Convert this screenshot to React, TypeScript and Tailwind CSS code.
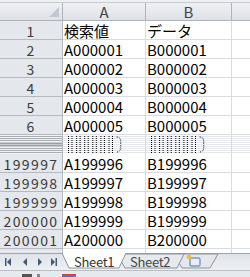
import React from "react";

const F = { fontFamily: '"Noto Sans CJK JP", "Noto Sans", sans-serif' };

const top = [
  ["1", "検索値", "データ"],
  ["2", "A000001", "B000001"],
  ["3", "A000002", "B000002"],
  ["4", "A000003", "B000003"],
  ["5", "A000004", "B000004"],
  ["6", "A000005", "B000005"],
];
const bottom = [
  ["199997", "A199996", "B199996"],
  ["199998", "A199997", "B199997"],
  ["199999", "A199998", "B199998"],
  ["200000", "A199999", "B199999"],
  ["200001", "A200000", "B200000"],
  ["200002", "", ""],
];

function Row({ r }: { r: string[] }) {
  return (
    <div className="flex h-[19px] shrink-0">
      <div className="w-[63px] shrink-0 bg-[#e4e7eb] border-r border-b border-[#b4b9c0] flex items-center justify-center text-[14px] text-[#3b3b3b] tracking-[1.4px] leading-none pt-[1px]">
        {r[0]}
      </div>
      <div className="w-[83px] shrink-0 border-r border-b border-[#d8dce2] flex items-center pl-[1px] text-[15px] text-black leading-none pt-[1px] whitespace-nowrap overflow-hidden">
        {r[1]}
      </div>
      <div className="w-[86px] shrink-0 border-r border-b border-[#d8dce2] flex items-center pl-[1px] text-[15px] text-black leading-none pt-[1px] whitespace-nowrap overflow-hidden">
        {r[2]}
      </div>
      <div className="flex-1 border-b border-[#d8dce2]" />
    </div>
  );
}

function Squish({ x0 }: { x0: number }) {
  const xs: number[] = [];
  const w = 8.1;
  for (let i = 0; i < 6; i++) {
    xs.push(x0 + i * w + 1.5, x0 + i * w + 5);
  }
  const e = x0 + 6 * w;
  return (
    <svg width="80" height="19" className="absolute left-0 top-0">
      {xs.map((x, i) => (
        <line key={i} x1={x} y1={1} x2={x} y2={18} stroke="#000" strokeWidth={1} strokeDasharray="1 1" />
      ))}
      <path d={`M${e + 1} 2 Q${e + 6} 2 ${e + 5} 9 Q${e + 6} 17 ${e + 1} 17`} stroke="#000" strokeWidth={1} strokeDasharray="1 1" fill="none" />
    </svg>
  );
}

function Split() {
  const cellBg = "bg-[repeating-linear-gradient(to_bottom,#ffffff_0px,#ffffff_1px,#e3e6eb_1px,#e3e6eb_2px)]";
  return (
    <div className="flex h-[19px] shrink-0">
      <div className="w-[63px] shrink-0 border-r border-[#b4b9c0] bg-[repeating-linear-gradient(to_bottom,#f2f3f5_0px,#f2f3f5_1px,#a9aeb5_1px,#a9aeb5_2px)] flex flex-col justify-center">
        <div className="h-[5px] bg-[repeating-linear-gradient(to_bottom,#c9cdd3_0px,#c9cdd3_1px,#9ca1a8_1px,#9ca1a8_2px)]" />
      </div>
      <div className={`w-[83px] shrink-0 border-r border-[#d8dce2] relative ${cellBg}`}>
        <Squish x0={4} />
      </div>
      <div className={`w-[86px] shrink-0 border-r border-[#d8dce2] relative ${cellBg}`}>
        <Squish x0={4} />
      </div>
      <div className={`flex-1 ${cellBg}`} />
    </div>
  );
}

function Tabs() {
  return (
    <div className="relative h-[17px] shrink-0 bg-[linear-gradient(to_bottom,#dfe3e8,#eef0f3)] border-t border-[#9ea4ab]">
      <svg width="250" height="17" className="absolute left-0 top-[-1px]">
        <g fill="#3f5a7a">
          <rect x="5" y="5" width="1.5" height="8" />
          <polygon points="7,9 11,5 11,13" />
          <polygon points="23,9 27,5 27,13" />
          <polygon points="38,5 42,9 38,13" />
          <polygon points="51,5 55,9 51,13" />
          <rect x="55.5" y="5" width="1.5" height="8" />
        </g>
        <polygon points="174,1 218,1 210,15 182,15" fill="#e4e7eb" stroke="#8e949b" />
        <polygon points="117,1 184,1 177,15 125,15" fill="#e6e9ed" stroke="#8e949b" />
        <polygon points="62,0 126,0 119,15 69,15" fill="#ffffff" stroke="#8e949b" />
        <line x1="63" y1="0.5" x2="125" y2="0.5" stroke="#ffffff" strokeWidth="1.5" />
        <rect x="190" y="5" width="10" height="8" fill="#e8eef7" stroke="#4a6fa5" strokeWidth="1" rx="1" />
        <circle cx="189" cy="4" r="2.3" fill="#f0c030" />
      </svg>
      <div className="absolute left-[74px] top-0 text-[13px] tracking-[-0.3px] leading-[16px] text-[#333] whitespace-nowrap" style={F}>Sheet1</div>
      <div className="absolute left-[130px] top-0 text-[13px] tracking-[-0.3px] leading-[16px] text-[#444] whitespace-nowrap" style={F}>Sheet2</div>
    </div>
  );
}

export default function App() {
  return (
    <div className="w-[250px] h-[277px] overflow-hidden bg-white flex flex-col" style={F}>
      <div className="h-[253px] overflow-hidden flex flex-col shrink-0">
        <div className="h-[3px] shrink-0 bg-[#eef0f2] border-b border-[#c6cbd1]" />
        <div className="flex h-[18px] shrink-0 bg-[linear-gradient(to_bottom,#eef0f3,#dde1e6)]">
          <div className="w-[63px] shrink-0 border-r border-b border-[#aeb4bb] relative">
            <svg width="10" height="10" className="absolute right-[3px] bottom-[3px]">
              <polygon points="10,0 10,10 0,10" fill="#c3c8ce" />
            </svg>
          </div>
          <div className="w-[83px] shrink-0 border-r border-b border-[#aeb4bb] flex items-center justify-center text-[15px] text-[#444] leading-none">A</div>
          <div className="w-[86px] shrink-0 border-r border-b border-[#aeb4bb] flex items-center justify-center text-[15px] text-[#444] leading-none">B</div>
          <div className="flex-1 border-b border-[#aeb4bb]" />
        </div>
        {top.map((r) => (
          <Row key={r[0]} r={r} />
        ))}
        <Split />
        {bottom.map((r) => (
          <Row key={r[0]} r={r} />
        ))}
      </div>
      <Tabs />
      <div className="flex-1 bg-[#e6e9ed] border-t border-[#b9bec4] relative">
        <div className="absolute left-[22px] top-[3px] w-[10px] h-[4px] bg-[#555]" />
        <div className="absolute left-[37px] top-[3px] w-[3px] h-[4px] bg-[#888]" />
        <div className="absolute left-[62px] top-[3px] w-[14px] h-[4px] bg-[#4a78c0] border-t border-[#d04040]" />
      </div>
    </div>
  );
}
